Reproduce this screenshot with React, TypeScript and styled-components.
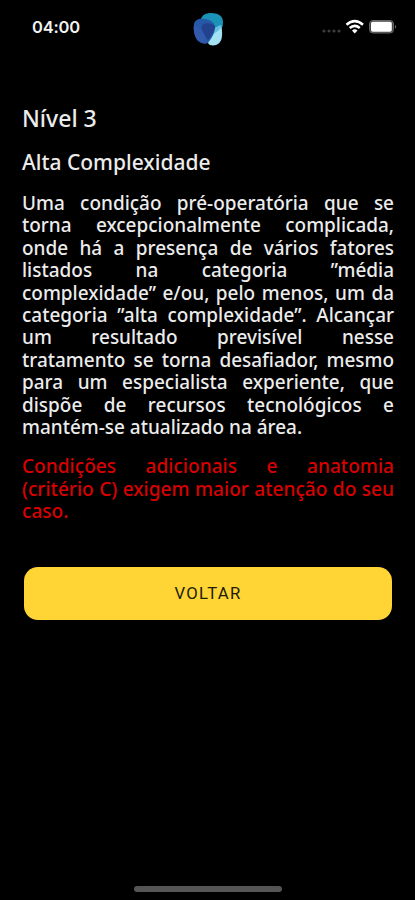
import React from "react";
import styled, { createGlobalStyle } from "styled-components";

const GlobalStyle = createGlobalStyle`
  * { box-sizing: border-box; }
  html, body { margin: 0; background: #000; }
`;

const Screen = styled.div`
  width: 100%;
  max-width: 415px;
  height: 900px;
  display: flex;
  flex-direction: column;
  background: #000;
  color: #ececec;
  font-family: "Noto Sans", "Open Sans", sans-serif;
  font-weight: 500;
  overflow: hidden;
`;

const StatusBar = styled.header`
  height: 56px;
  flex: none;
  display: grid;
  grid-template-columns: 1fr 34px 1fr;
  padding: 0 17px 0 32px;
`;

const Clock = styled.time`
  padding-top: 17px;
  font: 600 16.5px/20px Inter, sans-serif;
  letter-spacing: -0.2px;
  color: #f2f2f2;
`;

const Logo = styled.svg`
  width: 34px;
  height: 38px;
  margin-top: 10px;
  margin-left: -8px;
`;

const Indicators = styled.div`
  display: flex;
  justify-content: flex-end;
  align-items: flex-start;
  padding-top: 18px;
`;

const IndicatorIcons = styled.svg`
  flex: none;
  width: 78px;
  height: 18px;
`;

const Content = styled.main`
  flex: 1;
  padding: 48px 21px 0 22px;
`;

const Level = styled.h1`
  margin: 0;
  font-size: 23px;
  font-weight: 500;
  line-height: 28px;
`;

const Title = styled.h2`
  margin: 17px 0 0;
  font-size: 21px;
  font-weight: 500;
  line-height: 26px;
`;

const Paragraph = styled.p<{ $warning?: boolean }>`
  margin: 17px 0 0;
  font-size: ${(p) => (p.$warning ? "19.1px" : "18.97px")};
  line-height: 22.4px;
  text-align: justify;
  color: ${(p) => (p.$warning ? "#d90000" : "#ececec")};
`;

const BackButton = styled.button`
  display: block;
  width: 368px;
  height: 53px;
  margin: 44px 0 0 2px;
  padding: 0;
  border: 0;
  border-radius: 14px;
  background: #ffd535;
  color: #211c08;
  font: 400 16.7px/54px Roboto, sans-serif;
  letter-spacing: 1.3px;
`;

const HomeIndicator = styled.div`
  flex: none;
  align-self: center;
  width: 148px;
  height: 6px;
  margin-bottom: 8px;
  border-radius: 3px;
  background: #555;
`;

export default function App() {
  return (
    <Screen>
      <GlobalStyle />
      <StatusBar>
        <Clock>04:00</Clock>
        <Logo viewBox="190 10 34 38" aria-hidden="true">
          <path d="M201 19C202 15 206 13 211 13C218 13 223 16 223 22C223 26 222 30 218 32L206 31Z" fill="#1b93b8" />
          <path d="M221.5 27C215 28 210 33 208 43C209 45.5 213 46 216 45C222 43 223 36 221.5 27Z" fill="#a3e2f3" />
          <path d="M221.8 25C215 26 211 31 208.5 40L215 33C218 31 221 29 221.8 25Z" fill="#62c2df" />
          <path d="M194 24C195 19 200 18 205 19C212 20 216 24 214.8 29C214 34 211 40 207.5 43C204 45 198 42 196 38C194 34 193 28 194 24Z" fill="#2658a8" />
          <path d="M202 25C206 22 212 23 215 26C215 31 211 37 208 40C204 36 201 30 202 25Z" fill="#23428d" />
          <path d="M194 26C201 26 205 34 207.5 43C202 44 198 42 196 38C194 34 193.5 30 194 26Z" fill="#3159ac" />
        </Logo>
        <Indicators>
          <IndicatorIcons viewBox="320 18 78 18" aria-hidden="true">
            <g fill="#3c3c3c">
              <circle cx="324" cy="31" r="1.6" />
              <circle cx="329" cy="31" r="1.6" />
              <circle cx="334" cy="31" r="1.6" />
              <circle cx="339" cy="31" r="1.6" />
            </g>
            <g fill="none" stroke="#fff" strokeWidth="2.5">
              <path d="M346.5 24.7Q354.7 17.5 363 24.7" />
              <path d="M349.7 28Q354.7 23.7 359.8 28" />
            </g>
            <path d="M352 30.4Q354.7 28.2 357.5 30.4L354.7 33.5Z" fill="#fff" />
            <rect x="369.5" y="20.5" width="24" height="12.5" rx="3.5" fill="#444" stroke="#666" />
            <rect x="371" y="21.8" width="20.8" height="10" rx="1.8" fill="#fff" />
            <path d="M395 25Q397.2 26.7 395 28.7Z" fill="#777" />
          </IndicatorIcons>
        </Indicators>
      </StatusBar>
      <Content>
        <Level>Nível 3</Level>
        <Title>Alta Complexidade</Title>
        <Paragraph>
          Uma condição pré-operatória que se torna excepcionalmente complicada, onde há a presença de vários
          fatores listados na categoria ”média complexidade” e/ou, pelo menos, um da categoria ”alta
          complexidade”. Alcançar um resultado previsível nesse tratamento se torna desafiador, mesmo para um
          especialista experiente, que dispõe de recursos tecnológicos e mantém-se atualizado na área.
        </Paragraph>
        <Paragraph $warning>
          Condições adicionais e anatomia (critério C) exigem maior atenção do seu caso.
        </Paragraph>
        <BackButton type="button">VOLTAR</BackButton>
      </Content>
      <HomeIndicator />
    </Screen>
  );
}
